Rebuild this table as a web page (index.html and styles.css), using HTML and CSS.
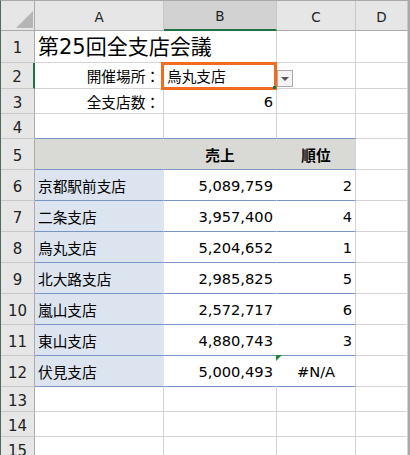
FILE: index.html
```html
<!DOCTYPE html>
<html lang="ja">
<head>
<meta charset="utf-8">
<title>第25回全支店会議</title>
<link rel="stylesheet" href="styles.css">
</head>
<body>
<div class="sheet">
  <div class="h corner"><span class="corner-tri"></span></div>
  <div class="h colh">A</div>
  <div class="h colh sel">B</div>
  <div class="h colh">C</div>
  <div class="h colh">D</div>

  <div class="h rowh">1</div>
  <div class="c title">第25回全支店会議</div>
  <div class="c"></div>
  <div class="c"></div>
  <div class="c"></div>

  <div class="h rowh sel">2</div>
  <div class="c r">開催場所：</div>
  <div class="c">烏丸支店</div>
  <div class="c"></div>
  <div class="c"></div>

  <div class="h rowh">3</div>
  <div class="c r">全支店数：</div>
  <div class="c r">6</div>
  <div class="c"></div>
  <div class="c"></div>

  <div class="h rowh">4</div>
  <div class="c tb-top"></div>
  <div class="c tb-top"></div>
  <div class="c tb-top"></div>
  <div class="c"></div>

  <div class="h rowh">5</div>
  <div class="c th tA"></div>
  <div class="c th tB ctr">売上</div>
  <div class="c th tC ctr">順位</div>
  <div class="c"></div>

  <div class="h rowh">6</div>
  <div class="c td tA">京都駅前支店</div>
  <div class="c td tB r">5,089,759</div>
  <div class="c td tC r">2</div>
  <div class="c"></div>

  <div class="h rowh">7</div>
  <div class="c td tA">二条支店</div>
  <div class="c td tB r">3,957,400</div>
  <div class="c td tC r">4</div>
  <div class="c"></div>

  <div class="h rowh">8</div>
  <div class="c td tA">烏丸支店</div>
  <div class="c td tB r">5,204,652</div>
  <div class="c td tC r">1</div>
  <div class="c"></div>

  <div class="h rowh">9</div>
  <div class="c td tA">北大路支店</div>
  <div class="c td tB r">2,985,825</div>
  <div class="c td tC r">5</div>
  <div class="c"></div>

  <div class="h rowh">10</div>
  <div class="c td tA">嵐山支店</div>
  <div class="c td tB r">2,572,717</div>
  <div class="c td tC r">6</div>
  <div class="c"></div>

  <div class="h rowh">11</div>
  <div class="c td tA">東山支店</div>
  <div class="c td tB r">4,880,743</div>
  <div class="c td tC r">3</div>
  <div class="c"></div>

  <div class="h rowh">12</div>
  <div class="c td tA">伏見支店</div>
  <div class="c td tB r">5,000,493</div>
  <div class="c td tC ctr err">#N/A</div>
  <div class="c"></div>

  <div class="h rowh">13</div>
  <div class="c"></div>
  <div class="c"></div>
  <div class="c"></div>
  <div class="c"></div>

  <div class="h rowh">14</div>
  <div class="c"></div>
  <div class="c"></div>
  <div class="c"></div>
  <div class="c"></div>

  <div class="h rowh">15</div>
  <div class="c"></div>
  <div class="c"></div>
  <div class="c"></div>
  <div class="c"></div>

  <div class="sel-box"></div>
  <div class="fill-handle"></div>
  <div class="dropdown"><span class="dd-arrow"></span></div>
</div>
</body>
</html>
```

FILE: styles.css
```css
* { box-sizing: border-box; }
html, body { margin: 0; padding: 0; background: #ffffff; }
body {
  width: 410px;
  height: 455px;
  overflow: hidden;
  font-family: "DejaVu Sans", "Noto Sans CJK JP", sans-serif;
  color: #000;
}
.sheet {
  position: relative;
  display: grid;
  grid-template-columns: 34px 129px 113px 79px 52px;
  grid-template-rows: 30px 32px 26px 25px 25px repeat(8, 31px) 25px 25px 25px;
  width: 410px;
  border-left: 1px solid #4e6d5b;
  border-top: 1px solid #a9a9a9;
  border-right: 2px solid #a9a9a9;
}
.c {
  position: relative;
  display: flex;
  align-items: center;
  padding: 0 3px;
  font-size: 14.67px;
  white-space: nowrap;
  min-width: 0;
  background: #fff;
  border-right: 1px solid #d4d4d4;
  border-bottom: 1px solid #d4d4d4;
}
.r { justify-content: flex-end; }
.ctr { justify-content: center; }
.title {
  font-size: 21px;
  border-right-color: transparent;
  overflow: visible;
  z-index: 1;
  padding-bottom: 3px;
}
.h {
  display: flex;
  align-items: center;
  justify-content: center;
  background: #e6e6e6;
  color: #222;
  border-right: 1px solid #c8c8c8;
  border-bottom: 1px solid #c8c8c8;
}
.colh { font-size: 13.5px; border-bottom-color: #ababab; padding-top: 2px; }
.colh.sel { background: #d2d2d2; border-bottom: 2px solid #217346; }
.rowh { font-size: 15px; border-right-color: #ababab; padding-top: 3px; }
.rowh.sel { border-right: 2px solid #217346; }
.corner { position: relative; border-bottom-color: #ababab; border-right-color: #ababab; }
.corner-tri {
  position: absolute;
  right: 1px;
  bottom: 2px;
  width: 17px;
  height: 17px;
  background: #b5b5b5;
  clip-path: polygon(100% 0, 100% 100%, 0 100%);
}
.tb-top { border-bottom-color: #7895c5; }
.th { background: #d9dad6; font-weight: bold; border-bottom-color: #7895c5; }
.td { border-bottom-color: #7895c5; }
.th.tA, .th.tB { border-right-color: #d9dad6; }
.td.tA { background: #dce4ef; border-right-color: #dce4ef; }
.td.tB { border-right-color: #ffffff; }
.err::before {
  content: "";
  position: absolute;
  top: -1px;
  left: -1px;
  border-top: 6px solid #1f8a36;
  border-right: 6px solid transparent;
}
.sel-box {
  position: absolute;
  left: 160px;
  top: 61px;
  width: 116px;
  height: 28px;
  border: 3px solid #f26b21;
  z-index: 2;
}
.fill-handle {
  position: absolute;
  left: 272px;
  top: 85px;
  width: 3px;
  height: 3px;
  background: #217346;
  z-index: 3;
}
.dropdown {
  position: absolute;
  left: 276px;
  top: 69px;
  width: 16px;
  height: 17px;
  border: 1px solid #ababab;
  background: #f3f3f3;
  display: flex;
  align-items: center;
  justify-content: center;
  z-index: 2;
}
.dd-arrow {
  width: 0;
  height: 0;
  border-left: 4px solid transparent;
  border-right: 4px solid transparent;
  border-top: 4px solid #555;
}
```
